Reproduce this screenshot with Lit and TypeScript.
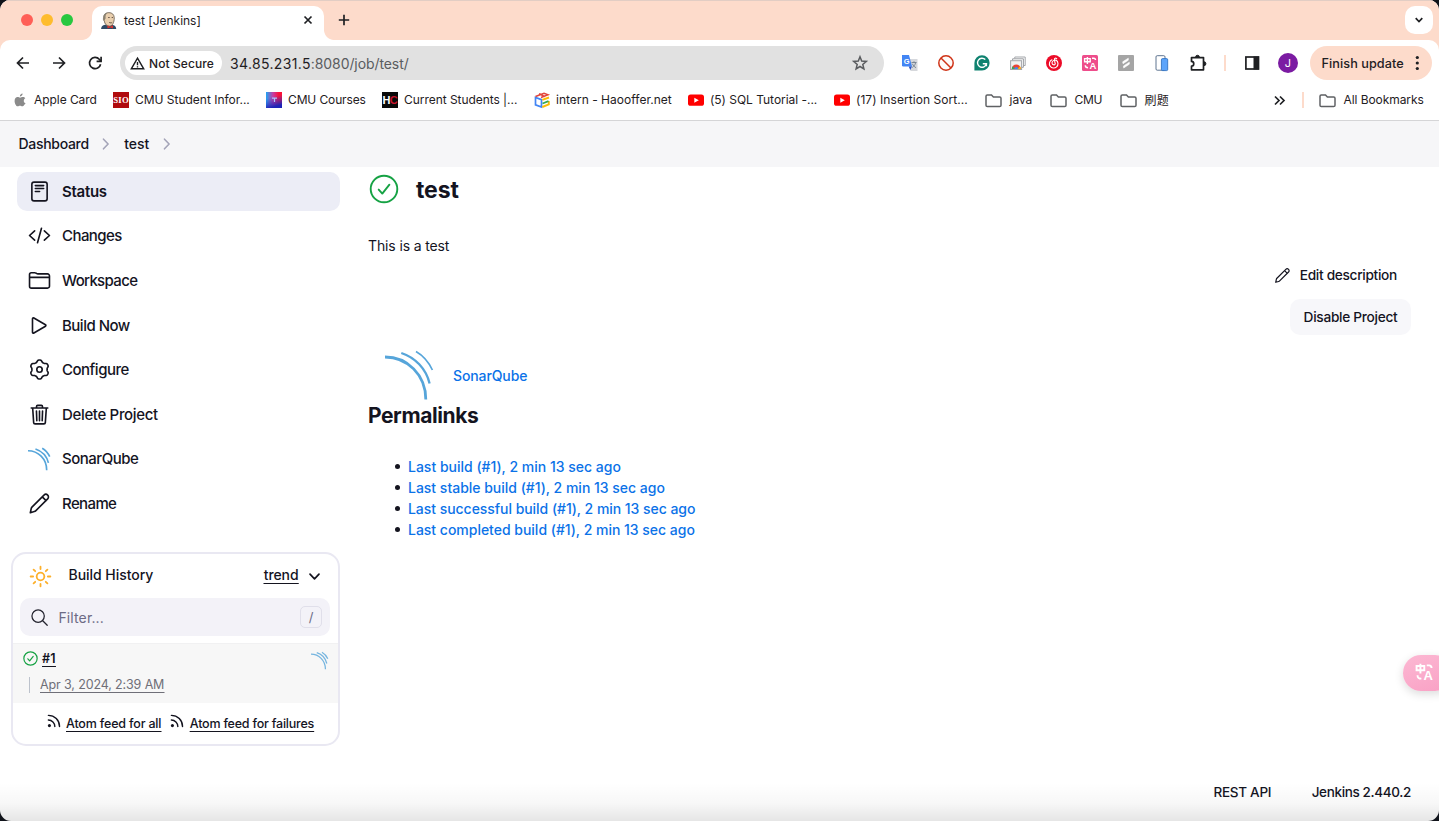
import { LitElement, html, svg, css } from "lit";
import { customElement, property } from "lit/decorators.js";

/** One line of text, tracked so that it fills the given width. */
@customElement("ui-text")
class UiText extends LitElement {
  @property() text = "";
  @property({ type: Number }) w = 0;

  static styles = css`
    :host { display: inline-block; white-space: pre; }
    .label { text-decoration: inherit; text-underline-offset: inherit; }
  `;

  firstUpdated() {
    const label = this.renderRoot.querySelector(".label") as HTMLElement;
    const natural = label.getBoundingClientRect().width;
    if (this.w && natural) {
      label.style.letterSpacing = `${(this.w + 0.3 - natural) / this.text.length}px`;
    }
  }

  render() {
    return html`<span class="label">${this.text}</span>`;
  }
}

const t = (text: string, w: number, cls = "") =>
  html`<ui-text class=${cls} .text=${text} .w=${w}></ui-text>`;

const icon = (size: number, box: string, body: unknown, cls = "line") =>
  html`<svg class=${cls} width=${size} height=${size} viewBox=${box}>${body}</svg>`;

/* ---------- page icons ---------- */
const gearPath = (() => {
  let d = "";
  for (let i = 0; i < 120; i++) {
    const a = (i / 120) * Math.PI * 2;
    const wave = Math.cos(6 * (a - Math.PI / 2));
    const r = 190 + 23 * Math.tanh(wave * 1.6);
    d += `${i ? "L" : "M"}${(256 + r * Math.cos(a)).toFixed(1)} ${(256 + r * Math.sin(a)).toFixed(1)}`;
  }
  return d + "Z";
})();

const big = "0 0 512 512";
const reader = svg`<rect x="86" y="48" width="340" height="416" rx="48"/><path d="M164 124h184M164 190h184M164 256h94"/>`;
const code = svg`<path d="M148 360L34 256l114-104M364 360l114-104-114-104M300 96l-88 320"/>`;
const folder = svg`<path d="M434 426H78a44 44 0 01-44-44V124a40 40 0 0140-40h78a40 40 0 0122 6.700l22 12a40 40 0 0022 6.700H434a44 44 0 0144 44v228a44 44 0 01-44 44zM34 186h444"/>`;
const play = svg`<path d="M100 108v296c0 17 17 28 31 20l258-151c12-7 12-27 0-34L131 88c-14-8-31 3-31 20z"/>`;
const gear = svg`<path d=${gearPath}/><circle cx="256" cy="256" r="60"/>`;
const trash = svg`<path d="M104 112l22 324c1 18 14 28 32 28h196c18 0 31-10 32-28l22-324M72 112h368M190 112V76a24 24 0 0124-24h84a24 24 0 0124 24v36M256 180v216M188 180l8 216M324 180l-8 216"/>`;
const pencil = svg`<path d="M52 460l20-92c3-12 8-22 16-30L356 70a48 48 0 0182 82L170 420c-8 8-18 13-30 16zM318 108l84 84"/>`;
const search = svg`<path d="M221 64a157 157 0 10157 157A157 157 0 00221 64zM338 338L452 452"/>`;
const rss = svg`<circle class="dot" cx="88" cy="424" r="56"/><path stroke-width="52" d="M50 222c132 0 236 104 236 236M50 50c228 0 408 180 408 408"/>`;
const sun = svg`<circle cx="12" cy="12" r="4"/><path d="M12 1.700v2.600M12 19.700v2.600M1.700 12h2.600M19.700 12h2.600M4.800 4.800l1.700 1.700M17.500 17.500l1.700 1.700M4.800 19.200l1.700-1.700M17.500 6.500l1.700-1.700"/>`;
const sonar = svg`<path stroke-width="2.800" d="M0 6C22 6 40.800 23.500 40.800 48.500"/><path stroke-width="2.300" d="M16.300 2C30 6.500 41 17.500 44.600 32.500"/><path stroke-width="1.700" d="M31 .6C38 4.600 44 12 47.400 19"/>`;
const okMark = (sw: number) => svg`<circle cx="15" cy="15" r="13.300" stroke-width=${sw}/><path stroke-width=${sw} d="M9.700 15.600l3.600 4L20.400 10.700"/>`;
const chevR = svg`<path d="M4.500 2.200l4.600 4.800-4.600 4.800"/>`;
const chevD = svg`<path d="M3 5.200l4.500 4.700 4.500-4.700"/>`;

/* ---------- browser icons ---------- */
const bmFolder = svg`<path d="M1 3.700c0-.8.5-1.300 1.300-1.300h4.200l1.900 2h6.300c.8 0 1.300.5 1.300 1.300v7c0 .8-.5 1.300-1.300 1.300H2.300c-.8 0-1.300-.5-1.300-1.300z"/>`;
const apple = svg`<path fill="#8b8b8b" d="M10.600 1.500c.1 1.600-1.200 2.900-2.700 2.900C7.700 2.900 9.100 1.600 10.600 1.500zM12.900 12c-.9 1.500-1.700 2.300-2.700 2.300-.9 0-1.200-.5-2.200-.5s-1.300.5-2.200.5C4 14.300 2.600 11.300 2.600 8.900c0-2.400 1.400-3.800 3-3.800 1.100 0 1.700.6 2.500.6.700 0 1.600-.7 2.900-.7.900 0 1.800.5 2.300 1.300-2.200 1.400-1.900 4.600.6 5.300-.3.200-.6.300-1 .4z"/>`;
const sio = svg`<rect width="16" height="16" fill="#b00b0e"/><text class="serif" x="8" y="11.300" font-size="8.700" textLength="15.500" text-anchor="middle" fill="#fff">SIO</text>`;
const courses = svg`<defs><linearGradient id="ca" x1="0" y1="0" x2="1" y2="0"><stop offset="0" stop-color="#1ca4f5"/><stop offset=".45" stop-color="#c93aa0"/><stop offset=".8" stop-color="#fb1238"/></linearGradient><linearGradient id="cb" x1="0" y1="0" x2=".3" y2="1"><stop offset=".4" stop-color="#2b35c8" stop-opacity="0"/><stop offset="1" stop-color="#1d23b8"/></linearGradient></defs><rect width="16" height="16" fill="url(#ca)"/><rect width="16" height="16" fill="url(#cb)"/><path d="M6 6.200h5M8.500 6v4" stroke="#a9c4ff" stroke-width="1.200" fill="none"/>`;
const hc = svg`<rect width="16" height="16" fill="#0a0a0a"/><text class="sans" x=".6" y="12" font-size="11" fill="#fff">H</text><text class="sans" x="7.800" y="12" font-size="11" fill="#c8142d">C</text>`;
const hao = svg`<path d="M1.500 5.500v7.300l6 2.200V7.700z" fill="none" stroke="#4285f4" stroke-width="1.700"/><path d="M8.300 7.900L15 5.500M8.300 15l6.500-2.700V9" fill="none" stroke="#fbbc05" stroke-width="1.900"/><path d="M8.500 11.500l6-2.300" stroke="#34a853" stroke-width="1.800"/><path d="M1.500 4.500L10 1.200l4 1.600-7 2.700M5 1.800l6 2.800" fill="none" stroke="#e2453a" stroke-width="1.500"/>`;
const yt = svg`<rect y="2.500" width="16" height="11.300" rx="2.600" fill="#f00"/><path d="M6.300 5.700v5l4.500-2.500z" fill="#fff"/>`;
const jenkins = svg`<path d="M1 16c.3-3 2-3.800 5-4h5c3 .2 4 1.500 4.300 4z" fill="#2d4a66"/><path d="M3.600 5C3.700 2 5.600.6 8.400.6c3 0 5 1.800 5 5 0 4.300-1.600 7.700-4.700 7.700-2.700 0-4.200-2.200-4.600-4.700C3 7.600 3 6.300 3.600 5z" fill="#e9cfae" stroke="#6a5f50" stroke-width=".8"/><path d="M4 8.500C2 4.500 3.500 1.200 7 .8c-1.600 1.400-2 3-1.700 5z" fill="#8a8272"/><path d="M7.700 5.200h1.400M11 5.200h1.200M8.700 9.800c1 .6 2 .5 2.800 0" stroke="#5b4a3e" stroke-width=".9" fill="none"/><path d="M7 12.500l2.500 1.300 2.700-1.300v3l-2.700-1-2.500 1z" fill="#d8332f"/>`;
const gtrans = svg`<path d="M6 4h9.500v12H8.500z" fill="#d6d8dc"/><path d="M0 0h7l3 11.500H1.200A1.200 1.200 0 010 10.300z" fill="#4285f4"/><path d="M6.700 11.500H10L8.300 15z" fill="#2a53c8"/><text class="sans" x="1.700" y="8.600" font-size="7.500" fill="#fff">G</text><path d="M9.500 7.500h5M12 6.300v1.200M13.700 7.500c-.5 2.500-2 4-3.500 5M10.400 8.800c.8 1.800 2 3 3.600 3.900" stroke="#73808f" stroke-width=".9" fill="none"/>`;
const ban = svg`<circle cx="8" cy="8" r="7.200" fill="#fffaf8" stroke="#cf3317" stroke-width="1.500"/><path d="M3 3l10 10" stroke="#cf3317" stroke-width="1.500"/>`;
const gram = svg`<path d="M8 .3A7.600 7.600 0 118 15.500H.4V8A7.600 7.600 0 018 .3z" fill="#0f8270"/><path d="M11.300 4.600A4.500 4.500 0 1012.400 8.800H8.800M12.400 8.500v2.700" fill="none" stroke="#fff" stroke-width="1.400"/>`;
const tabs = svg`<path d="M4.800 3.500V2h10.400v8.500h-1.700" fill="none" stroke="#a3a6aa" stroke-width="1"/><path d="M2.600 5.500V3.800h10.800v8.500h-1.700" fill="#fff" stroke="#9a9da1" stroke-width="1"/><rect x=".6" y="5.700" width="11" height="8.800" fill="#f1f1f1" stroke="#a3a6aa" stroke-width="1"/><path d="M1.800 14a4.500 4.500 0 019 0z" fill="#ea4335"/><path d="M1.800 14c0-1.200.3-2 .9-2.800L5 14z" fill="#34a853"/><path d="M10.800 14c0-1.200-.3-2-.9-2.800L7.600 14z" fill="#fbbc05"/><path d="M4.400 14a1.900 1.900 0 013.800 0z" fill="#4285f4"/>`;
const netease = svg`<circle cx="8" cy="8" r="8" fill="#ec0b28"/><path d="M10.700 3.600c-1-.8-2.500-.4-2.300 1l.6 3.300M5.900 4.800A4.300 4.300 0 1010.300 5.300c-2-.7-4.300.6-4.300 2.700a2 2 0 002 1.900 1.400 1.400 0 001.100-2" fill="none" stroke="#fff" stroke-width="1.100" stroke-linecap="round"/>`;
const zhA = svg`<path d="M2.600 3.600h5.600v3.100H2.600zM5.400 2v7M10 3.200h1.700c1.200 0 1.800.6 1.800 1.900M3.300 10.300c0 1.900.6 2.500 2.800 2.500" fill="none" stroke="#fff" stroke-width="1.400"/><text class="sans" x="7.600" y="13.700" font-size="9.500" fill="#fff">A</text>`;
const pinkA = svg`<rect width="16" height="16" rx="1.500" fill="#ee4d8b"/>${zhA}`;
const greyS = svg`<rect width="16" height="16" rx="1" fill="#a5a5a5"/><path d="M4.700 6.800L10.300 3.200v2L5 8.700zM5.500 11L11.300 7.200v2L5.700 13z" fill="#fff" stroke="#fff" stroke-width=".6" stroke-linejoin="round"/>`;
const device = svg`<rect x="2" y=".7" width="9" height="14.500" rx="1.200" fill="#fff" stroke="#4d6585" stroke-width=".9"/><rect x="7.400" y="3.600" width="6.300" height="12" rx="1.200" fill="#5ca4fa" stroke="#2668ba" stroke-width=".8"/>`;
const puzzle = svg`<path d="M1.500 2.600h12v12.200h-12v-3.600c3 0 3-4.800 0-4.800z" fill="none" stroke="#1f2023" stroke-width="1.700" stroke-linejoin="round"/><path d="M5.600 2.200a1.900 1.900 0 013.800 0M14 6.800a1.900 1.900 0 010 3.800z" fill="#1f2023" stroke="#1f2023"/>`;
const panel = svg`<rect x="1.900" y="2" width="12.600" height="12" fill="#fff" stroke="#1f2023" stroke-width="1.700"/><path d="M9.500 1.500H15v13H9.500z" fill="#1f2023"/>`;

const bookmarks: [unknown, string, number][] = [
  [apple, "Apple Card", 62.5],
  [sio, "CMU Student Infor...", 114.500],
  [courses, "CMU Courses", 77.500],
  [hc, "Current Students |...", 113],
  [hao, "intern - Haooffer.net", 115.500],
  [yt, "(5) SQL Tutorial -...", 107],
  [yt, "(17) Insertion Sort...", 111.500],
];
const folders: [string, number][] = [["java", 22.500], ["CMU", 27.500], ["刷题", 24]];
const tasks: [unknown, string, number][] = [
  [reader, "Status", 44.500],
  [code, "Changes", 59.500],
  [folder, "Workspace", 75],
  [play, "Build Now", 67.500],
  [gear, "Configure", 66.500],
  [trash, "Delete Project", 95.500],
  [null, "SonarQube", 76],
  [pencil, "Rename", 54],
];
const permalinks: [string, number][] = [
  ["Last build (#1), 2 min 13 sec ago", 212.500],
  ["Last stable build (#1), 2 min 13 sec ago", 256.500],
  ["Last successful build (#1), 2 min 13 sec ago", 287],
  ["Last completed build (#1), 2 min 13 sec ago", 286.500],
];

@customElement("app-root")
class AppRoot extends LitElement {
  static styles = css`
    :host {
      display: block; width: 1439px; height: 821px; overflow: hidden; background: #10131a;
      font-family: Inter, "Noto Sans CJK SC", sans-serif; color: #14141f;
    }
    * { box-sizing: border-box; }
    svg { display: block; flex: none; overflow: visible; }
    .line, .sonar, .ok, .sun, .chev { fill: none; stroke: currentColor; stroke-width: 36; stroke-linecap: round; stroke-linejoin: round; }
    .dot { fill: currentColor; stroke: none; }
    .sonar { stroke: #56a5da; stroke-linecap: butt; }
    .sonar.small path { stroke-width: 3.600; }
    .ok { stroke: #16a244; }
    .sun { stroke: #fdb02b; stroke-width: 1.9; }
    .chev { stroke-width: 1.7; }
    .serif { font-family: "Liberation Serif", serif; font-weight: 700; }
    .sans { font-family: "Liberation Sans", sans-serif; font-weight: 700; }
    .window {
      position: relative; display: flex; flex-direction: column; height: 821px; background: #fff;
      border-radius: 10px 10px 11px 11px; overflow: hidden;
    }

    .strip { display: flex; height: 40px; background: #fddbcb; border-top: 1px solid #e2cdc4; align-items: stretch; }
    .lights { display: flex; gap: 8px; padding: 13px 19px 0 21px; width: 92px; }
    .light { width: 12px; height: 12px; border-radius: 50%; background: #ff5f57; }
    .light.min { background: #febc2e; }
    .light.max { background: #28c840; }
    .tab {
      position: relative; display: flex; align-items: center; width: 232px; margin-top: 5px; padding: 0 11px 6px 8px;
      background: #fff; border-radius: 10px 10px 0 0; font-size: 12px; color: #1f2023;
    }
    .tab::before, .tab::after { content: ""; position: absolute; bottom: 0; width: 10px; height: 10px; }
    .tab::before { left: -10px; background: radial-gradient(circle at 0 0, #fddbcb 9.5px, #fff 10.3px); }
    .tab::after { right: -10px; background: radial-gradient(circle at 100% 0, #fddbcb 9.5px, #fff 10.3px); }
    .tabtitle { margin-left: 7px; flex: 1; }
    .glyph { fill: none; stroke: #1f2023; stroke-width: 1.7; }
    .plus { margin: 13px 0 0 14px; }
    .drop { display: grid; place-items: center; width: 28px; height: 28px; margin: 5px 6px 0 auto; border-radius: 10px; background: #fff; }
    .under { background: #fddbcb; }
    .toolbar { display: flex; align-items: center; height: 46px; padding: 0 7px 0 14.500px; background: #fff; border-radius: 10px 10px 0 0; color: #1f2023; }
    .nav { display: flex; gap: 20px; margin-right: 17.500px; }
    .omni { display: flex; align-items: center; width: 764px; height: 34px; padding: 0 16px 0 5px; border-radius: 17px; background: #e1e1e1; font-size: 14px; }
    .secure { display: flex; align-items: center; gap: 4px; width: 97px; height: 24px; margin-right: 8px; padding-left: 5px; border-radius: 12px; background: #fff; font-size: 12px; font-weight: 500; }
    .path { flex: 1; color: #5a5c5f; }
    .exts { display: flex; gap: 20px; margin-left: 18px; }
    .bar { width: 2px; height: 16px; background: #fddbcb; }
    .extbar { margin-left: 18px; }
    .panel { margin: 0 11px 0 18px; }
    .avatar { display: grid; place-items: center; width: 20px; height: 20px; margin-left: 7px; border-radius: 50%; background: #7b1ba2; color: #fff; font-size: 11px; }
    .update { display: flex; align-items: center; height: 34px; width: 122px; margin-left: auto; padding-left: 11.500px; border-radius: 17px; background: #fddbcb; font-size: 12.700px; font-weight: 500; gap: 9px; }
    .kebab { fill: #1f2023; }
    .marks { display: flex; align-items: center; height: 34px; padding: 0 15px 6px 12px; font-size: 12px; color: #1f2023; }
    .marks ui-text { margin-top: -1px; }
    .favs { display: grid; grid-template-columns: 101px 153px 116px 152px 154px 146px 151px 65px 70px 60px; }
    .mark { display: flex; align-items: center; gap: 6px; }
    .mark.dir { gap: 7.500px; }
    .dirico { fill: none; stroke: #5f6164; stroke-width: 1.500; }
    .more { margin: 0 16px 0 93px; }
    .all { margin-left: 15px; }

    .crumbs { display: flex; align-items: center; height: 46.500px; padding-left: 18.500px; border-top: 1.500px solid #d5d5d7; background: #f6f6f8; font-size: 14px; font-weight: 500; }
    .crumbs .chev { color: #a4a4b8; margin: 0 11px 0 10.500px; stroke-width: 1.600; }
    .page { display: flex; flex: 1; }
    .side { width: 340px; padding: 5px 0 0 10.500px; }
    .tasks { display: flex; flex-direction: column; gap: 5.350px; margin-left: 6.500px; }
    .task { display: flex; align-items: center; gap: 12px; height: 39.300px; padding-left: 11px; border-radius: 10px; font-size: 15px; font-weight: 500; }
    .task.on { background: #ecedf6; font-weight: 600; }
    .ico { display: grid; place-items: center; width: 22px; }
    .history { margin-top: 29px; width: 329.500px; height: 194px; border: 2px solid #e9e8f2; border-radius: 15px; overflow: hidden; }
    .hhead { display: flex; align-items: center; height: 44px; padding: 0 16.500px 0 16px; font-size: 14px; font-weight: 500; }
    .hhead ui-text { margin-top: -3px; }
    .hhead .chev { margin-left: 8px; }
    .hhead .htitle { margin-left: 17px; margin-right: auto; }
    .link { text-decoration: underline; text-underline-offset: 2.500px; }
    .filter { display: flex; align-items: center; height: 38px; margin: 0 8px 7px 7.500px; padding: 0 8px 0 11px; border-radius: 10px; background: #f3f2f8; color: #6c6b85; font-size: 14px; }
    .filter .line { color: #23232e; stroke-width: 32; }
    .ftext { margin: 0 auto 0 10.500px; }
    .key { display: grid; place-items: center; width: 22px; height: 22px; border: 1.500px solid #e0dfea; border-radius: 5px; font-size: 13px; }
    .build { height: 60px; padding: 6.500px 10px 0 10px; background: #f7f7f7; border-top: 1px solid #f1f1f2; }
    .brow { display: flex; align-items: center; gap: 4.500px; height: 16px; font-size: 12.500px; font-weight: 600; }
    .brow .sonar { margin: 3px 0 0 auto; opacity: .8; }
    .when { display: flex; align-items: center; height: 16px; margin: 10px 0 0 6.500px; padding-left: 10px; border-left: 1.500px solid #bcc2cc; font-size: 12.500px; color: #6f6f78; }
    .feeds { display: flex; align-items: center; height: 40px; padding-left: 34px; font-size: 12.500px; font-weight: 500; }
    .feeds svg { margin: -4px 5.500px 0 0; }
    .feeds .second { margin-left: 9px; }

    .main { flex: 1; display: flex; flex-direction: column; padding: 0 28px 0 28px; }
    .title { display: flex; align-items: center; height: 46px; font-size: 23px; font-weight: 700; }
    .title .ok { margin: -1px 17px 0 1px; }
    .desc { margin-top: 22.500px; height: 22px; line-height: 22px; font-size: 14px; }
    .actions { display: flex; flex-direction: column; align-items: flex-end; margin-top: .5px; font-size: 13.700px; font-weight: 500; }
    .edit { display: flex; align-items: center; gap: 9px; height: 35px; padding-right: 14px; }
    .disable { display: grid; place-items: center; width: 121px; height: 36px; margin-top: 6px; border-radius: 10px; background: #f7f7fa; }
    .sq { display: flex; align-items: center; height: 49px; margin: 16px 0 0 17px; gap: 20px; font-size: 14px; font-weight: 500; color: #0b72e8; }
    .perma { height: 30px; line-height: 30px; margin-top: 1.500px; font-size: 21px; font-weight: 700; }
    .links { display: flex; flex-direction: column; margin: 25px 0 0 27px; font-size: 14px; font-weight: 500; color: #0b72e8; }
    .plink { display: flex; align-items: center; height: 21px; gap: 8px; }
    .plink::before { content: ""; width: 5px; height: 5px; border-radius: 50%; background: #14141f; }
    .foot { display: flex; justify-content: flex-end; gap: 40.500px; height: 46px; margin-top: auto; padding-top: 9px; font-size: 13.500px; font-weight: 500; }
    .shade { position: absolute; left: 0; right: 0; bottom: 0; height: 38px; background: linear-gradient(rgba(0,0,0,0), rgba(0,0,0,.03) 55%, rgba(0,0,0,.1)); pointer-events: none; }
    .float {
      position: absolute; left: 1403px; top: 655px; display: flex; align-items: center; width: 50px; height: 36px; padding-left: 10px;
      border-radius: 18px; background: linear-gradient(160deg, #fcb8d3, #f9a0c4); box-shadow: 0 3px 10px rgba(0,0,0,.14);
    }
    .float svg { margin-top: -3px; }
  `;

  render() {
    return html`
      <div class="window">
        <div class="strip">
          <div class="lights"><div class="light"></div><div class="light min"></div><div class="light max"></div></div>
          <div class="tab">
            ${icon(17, "0 0 16 16", jenkins, "")}
            ${t("test [Jenkins]", 76.5, "tabtitle")}
            ${icon(10, "0 0 10 10", svg`<path d="M1.500 1.500l7 7M8.500 1.500l-7 7"/>`, "glyph")}
          </div>
          <div class="plus">${icon(12, "0 0 12 12", svg`<path d="M6 .8v10.400M.8 6h10.400"/>`, "glyph")}</div>
          <div class="drop">${icon(10, "0 0 10 10", svg`<path d="M1.700 3.200L5 6.500l3.300-3.300"/>`, "glyph")}</div>
        </div>
        <div class="under"><div class="toolbar">
          <div class="nav">
            ${icon(16, "0 0 16 16", svg`<path d="M14 8H3M8 2.500L2.500 8 8 13.500"/>`, "glyph")}
            ${icon(16, "0 0 16 16", svg`<path d="M2 8h11M8 2.500L13.500 8 8 13.500"/>`, "glyph")}
            ${icon(16, "0 0 16 16", svg`<path d="M13.600 9.200A5.600 5.600 0 1112.300 4.300L14 6"/><path d="M14.100 1.800v4.500H9.600"/>`, "glyph")}
          </div>
          <div class="omni">
            <div class="secure">
              ${icon(15, "0 0 15 15", svg`<path stroke-width="1.400" d="M7.500 2.200L13.700 12.800H1.300zM7.500 6v3.300M7.500 10.300v1.300"/>`, "glyph")}
              ${t("Not Secure", 64.5)}
            </div>
            ${t("34.85.231.5", 80.5)}
            ${t(":8080/job/test/", 97.5, "path")}
            ${icon(16, "0 0 16 16", svg`<path stroke="#5a5c5f" stroke-width="1.500" d="M8 1.800l1.700 4.300 4.600.3-3.500 3 1.100 4.500L8 11.500l-3.900 2.400 1.100-4.500-3.500-3 4.600-.3z"/>`, "glyph")}
          </div>
          <div class="exts">
            ${[gtrans, ban, gram, tabs, netease, pinkA, greyS, device, puzzle].map((e) => icon(16, "0 0 16 16", e, ""))}
          </div>
          <div class="bar extbar"></div>
          <div class="panel">${icon(16, "0 0 16 16", panel, "")}</div>
          <div class="avatar">J</div>
          <div class="update">
            ${t("Finish update", 82)}
            ${icon(16, "0 0 16 16", svg`<circle cx="4.300" cy="2.500" r="1.600"/><circle cx="4.300" cy="8" r="1.600"/><circle cx="4.300" cy="13.500" r="1.600"/>`, "kebab")}
          </div>
        </div></div>
        <div class="marks">
          <div class="favs">
            ${bookmarks.map(([ic, label, w]) => html`<div class="mark">${icon(16, "0 0 16 16", ic, "")}${t(label, w)}</div>`)}
            ${folders.map(([label, w]) => html`<div class="mark dir">${icon(17, "0 0 17 16", bmFolder, "dirico")}${t(label, w)}</div>`)}
          </div>
          <div class="more">${icon(13, "0 0 13 13", svg`<path d="M2 2.500l4 4-4 4M7 2.500l4 4-4 4"/>`, "glyph")}</div>
          <div class="bar"></div>
          <div class="mark dir all">${icon(17, "0 0 17 16", bmFolder, "dirico")}${t("All Bookmarks", 80)}</div>
        </div>

        <div class="crumbs">
          ${t("Dashboard", 70)}${icon(14, "0 0 14 14", chevR, "chev")}${t("test", 24.5)}${icon(14, "0 0 14 14", chevR, "chev")}
        </div>
        <div class="page">
          <div class="side">
            <div class="tasks">
              ${tasks.map(([ic, label, w], i) => html`
                <div class="task ${i === 0 ? "on" : ""}">
                  <div class="ico">${ic ? icon(23, big, ic) : icon(22, "0 0 48 48", sonar, "sonar small")}</div>
                  ${t(label, w)}
                </div>`)}
            </div>
            <div class="history">
              <div class="hhead">
                ${icon(23, "0 0 24 24", sun, "sun")}
                ${t("Build History", 84.5, "htitle")}${t("trend", 34.5, "link")}
                ${icon(15, "0 0 15 15", chevD, "chev")}
              </div>
              <div class="filter">${icon(17, "40 40 432 432", search)}${t("Filter...", 45, "ftext")}<div class="key">/</div></div>
              <div class="build">
                <div class="brow">${icon(15, "0 0 30 30", okMark(2.4), "ok")}${t("#1", 13.5, "link")}${icon(17, "0 0 48 48", sonar, "sonar small")}</div>
                <div class="when">${t("Apr 3, 2024, 2:39 AM", 124, "link")}</div>
              </div>
              <div class="feeds">
                ${icon(14, big, rss)}${t("Atom feed for all", 95, "link")}
                <div class="second">${icon(14, big, rss)}</div>${t("Atom feed for failures", 124, "link")}
              </div>
            </div>
          </div>
          <div class="main">
            <div class="title">${icon(30, "0 0 30 30", okMark(1.9), "ok")}${t("test", 42.5)}</div>
            <div class="desc">${t("This is a test", 81)}</div>
            <div class="actions">
              <div class="edit">${icon(17, big, pencil)}${t("Edit description", 97)}</div>
              <div class="disable">${t("Disable Project", 93.5)}</div>
            </div>
            <div class="sq">${icon(48, "0 0 48 48", sonar, "sonar")}${t("SonarQube", 74)}</div>
            <div class="perma">${t("Permalinks", 110)}</div>
            <div class="links">${permalinks.map(([label, w]) => html`<div class="plink">${t(label, w)}</div>`)}</div>
            <div class="foot">${t("REST API", 57.5)}${t("Jenkins 2.440.2", 99)}</div>
          </div>
        </div>
        <div class="shade"></div>
        <div class="float">${icon(22, "0 0 16 16", zhA, "")}</div>
      </div>
    `;
  }
}
